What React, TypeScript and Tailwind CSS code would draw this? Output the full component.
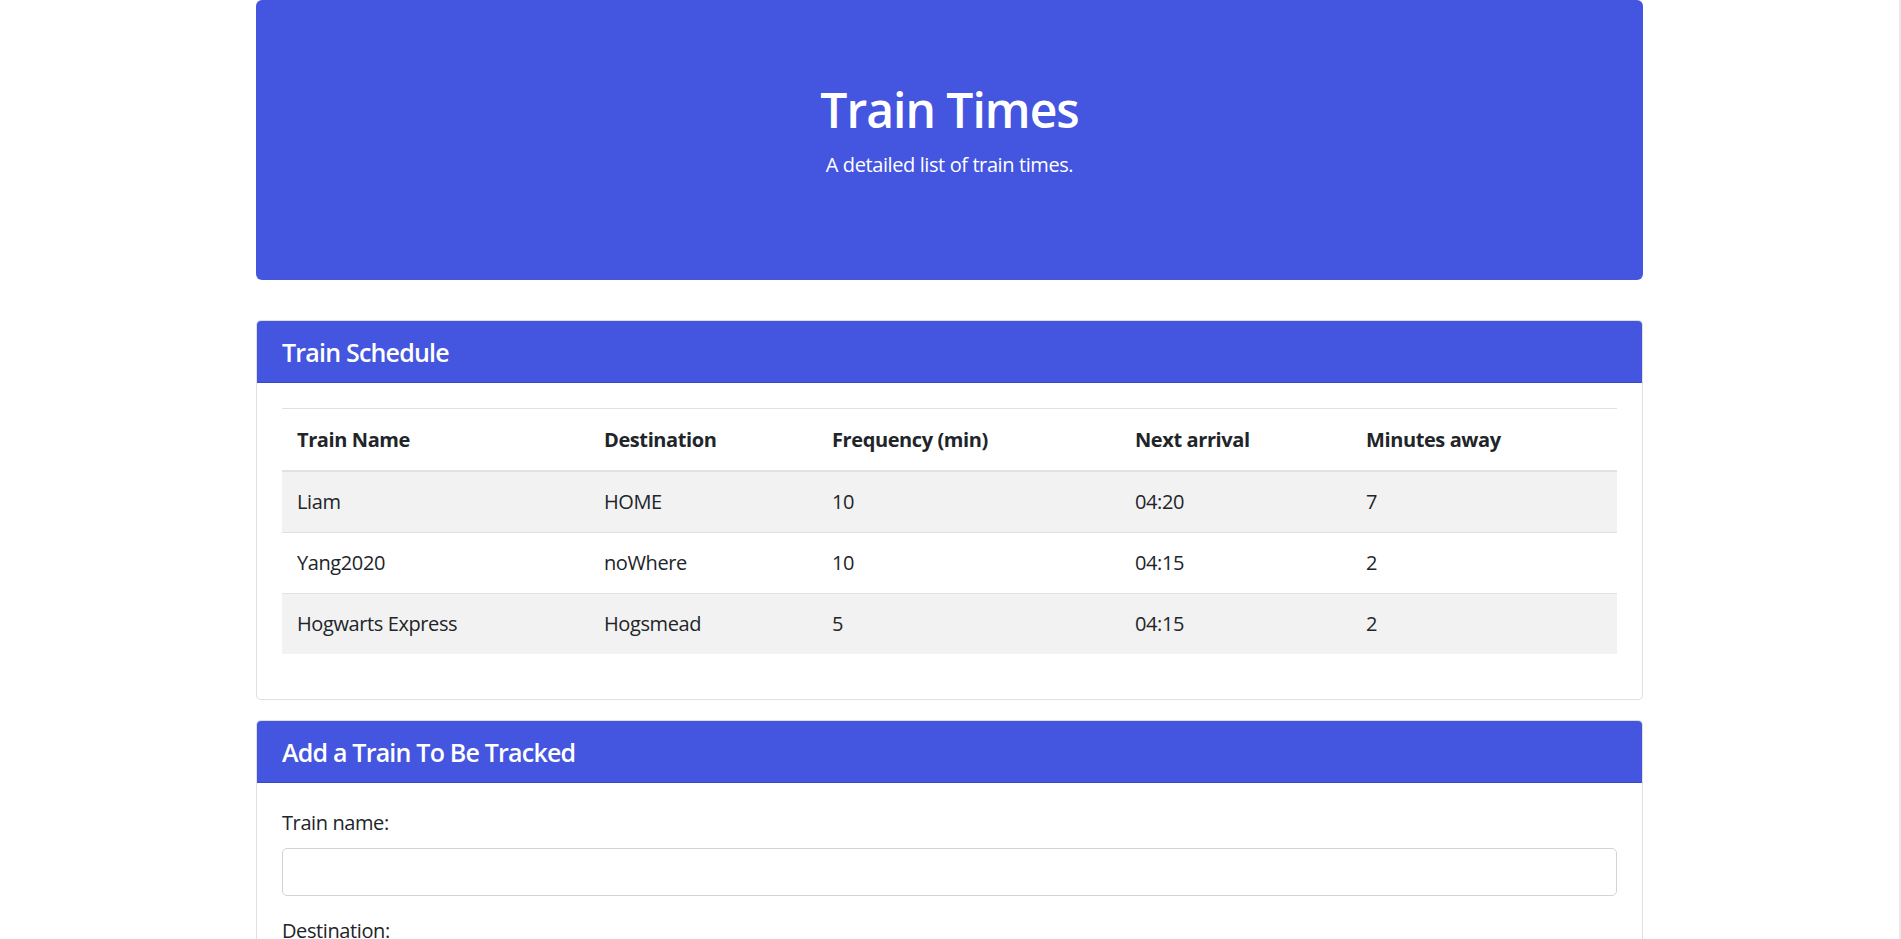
import { ChangeEvent, useState } from "react";

type Train = {
  name: string;
  destination: string;
  frequency: number;
  next: string;
  away: number;
};

const trains: Train[] = [
  { name: "Liam", destination: "HOME", frequency: 10, next: "04:20", away: 7 },
  { name: "Yang2020", destination: "noWhere", frequency: 10, next: "04:15", away: 2 },
  { name: "Hogwarts Express", destination: "Hogsmead", frequency: 5, next: "04:15", away: 2 },
];

const columns = [
  { label: "Train Name", width: "w-[307px]" },
  { label: "Destination", width: "w-[228px]" },
  { label: "Frequency (min)", width: "w-[303px]" },
  { label: "Next arrival", width: "w-[231px]" },
  { label: "Minutes away", width: "w-[266px]" },
];

const Card = ({ title, children }: { title: string; children: React.ReactNode }) => (
  <div className="mb-[20px] rounded-[5px] border border-black/[.125] bg-white">
    <div className="rounded-t-[4px] border-b border-black/[.125] bg-[#4455e0] px-[25px] pt-[16px] pb-[15px]">
      <h5 className="text-[25px] leading-[30px] font-semibold tracking-[-0.8px] text-white">{title}</h5>
    </div>
    <div className="p-[25px]">{children}</div>
  </div>
);

const Field = ({
  label,
  value,
  onChange,
}: {
  label: string;
  value: string;
  onChange: (e: ChangeEvent<HTMLInputElement>) => void;
}) => (
  <div className="mb-[20px]">
    <label className="mb-[10px] inline-block leading-[30px]">{label}</label>
    <input
      value={value}
      onChange={onChange}
      className="block h-[48px] w-full rounded-[5px] border border-[#ced4da] bg-white px-[15px] text-[20px] text-[#495057] outline-none"
    />
  </div>
);

export default function App() {
  const [form, setForm] = useState({ name: "", destination: "", first: "", frequency: "" });

  const update = (key: keyof typeof form) => (e: ChangeEvent<HTMLInputElement>) =>
    setForm({ ...form, [key]: e.target.value });

  return (
    <div
      className="flex min-h-screen bg-white text-[20px] leading-[30px] tracking-[-0.4px] text-[#212529]"
      style={{ fontFamily: '"Open Sans", "Noto Sans", sans-serif' }}
    >
      <main className="flex-1">
        <div className="mx-auto w-[1387px]">
          <div className="mb-[40px] rounded-[6px] bg-[#4455e0] px-[40px] py-[80px] text-center text-white">
            <h1 className="mb-[10px] text-[48px] leading-[60px] font-semibold tracking-[-1px]">Train Times</h1>
            <p className="mb-[20px]">A detailed list of train times.</p>
          </div>

          <Card title="Train Schedule">
            <table className="mb-[20px] w-full table-fixed">
              <thead>
                <tr>
                  {columns.map((c) => (
                    <th
                      key={c.label}
                      className={`${c.width} border-t border-b-2 border-[#dee2e6] px-[15px] pt-[16px] pb-[15px] text-left font-bold`}
                    >
                      {c.label}
                    </th>
                  ))}
                </tr>
              </thead>
              <tbody>
                {trains.map((t, i) => (
                  <tr key={t.name} className={i % 2 === 0 ? "bg-[#f2f2f2]" : ""}>
                    <td className="border-t border-[#dee2e6] p-[15px]">{t.name}</td>
                    <td className="border-t border-[#dee2e6] p-[15px]">{t.destination}</td>
                    <td className="border-t border-[#dee2e6] p-[15px]">{t.frequency}</td>
                    <td className="border-t border-[#dee2e6] p-[15px]">{t.next}</td>
                    <td className="border-t border-[#dee2e6] p-[15px]">{t.away}</td>
                  </tr>
                ))}
              </tbody>
            </table>
          </Card>

          <Card title="Add a Train To Be Tracked">
            <form onSubmit={(e) => e.preventDefault()}>
              <Field label="Train name:" value={form.name} onChange={update("name")} />
              <Field label="Destination:" value={form.destination} onChange={update("destination")} />
              <Field
                label="First Train Time (HH:mm - military time):"
                value={form.first}
                onChange={update("first")}
              />
              <Field label="Frequency (min):" value={form.frequency} onChange={update("frequency")} />
              <button
                type="submit"
                className="rounded-[5px] border border-[#4455e0] bg-[#4455e0] px-[15px] py-[7px] text-white"
              >
                Submit
              </button>
            </form>
          </Card>
        </div>
      </main>
      <div className="w-[2px] bg-[#e9e9e9]" />
    </div>
  );
}
